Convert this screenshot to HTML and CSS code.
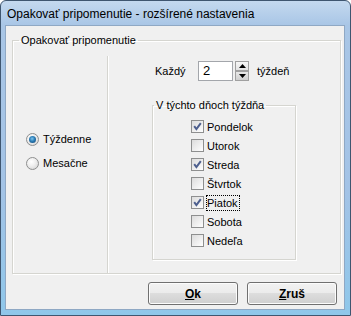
FILE: index.html
```html
<!DOCTYPE html>
<html>
  <head>
    <meta charset="UTF-8" />
    <link rel="stylesheet" href="styles.css">
  </head>
  <body>
    <div class="window">
      <div class="titlebar">Opakovať pripomenutie - rozšírené nastavenia</div>
      <div class="client">
        <fieldset class="group main-group">
          <legend>Opakovať pripomenutie</legend>
          <div class="cols">
            <div class="left-col">
              <div class="radio-row"><span class="radio checked"></span>Týždenne</div>
              <div class="radio-row"><span class="radio"></span>Mesačne</div>
            </div>
            <div class="right-col">
              <div class="every-row">
                <span class="every-label">Každý</span>
                <span class="num-field">2</span>
                <span class="spinner">
                  <span class="spin-btn"><svg width="7" height="4" viewBox="0 0 7 4"><path d="M0 4 L3.5 0 L7 4 Z" fill="#000"/></svg></span>
                  <span class="spin-btn down"><svg width="7" height="4" viewBox="0 0 7 4"><path d="M0 0 L3.5 4 L7 0 Z" fill="#000"/></svg></span>
                </span>
                <span class="unit">týždeň</span>
              </div>
              <fieldset class="group days-group">
                <legend>V týchto dňoch týždňa</legend>
                <div class="check-list">
                  <div class="check-row"><span class="checkbox checked"><svg width="11" height="11" viewBox="0 0 11 11"><path d="M2.2 5.2 L4.4 8 L8.8 2.2" fill="none" stroke="#4d5f8e" stroke-width="2"/></svg></span>Pondelok</div>
                  <div class="check-row"><span class="checkbox"></span>Utorok</div>
                  <div class="check-row"><span class="checkbox checked"><svg width="11" height="11" viewBox="0 0 11 11"><path d="M2.2 5.2 L4.4 8 L8.8 2.2" fill="none" stroke="#4d5f8e" stroke-width="2"/></svg></span>Streda</div>
                  <div class="check-row"><span class="checkbox"></span>Štvrtok</div>
                  <div class="check-row"><span class="checkbox checked"><svg width="11" height="11" viewBox="0 0 11 11"><path d="M2.2 5.2 L4.4 8 L8.8 2.2" fill="none" stroke="#4d5f8e" stroke-width="2"/></svg></span><span class="focused">Piatok</span></div>
                  <div class="check-row"><span class="checkbox"></span>Sobota</div>
                  <div class="check-row"><span class="checkbox"></span>Nedeľa</div>
                </div>
              </fieldset>
            </div>
          </div>
        </fieldset>
        <div class="buttons">
          <button class="btn"><u>O</u>k</button>
          <button class="btn"><u>Z</u>ruš</button>
        </div>
      </div>
    </div>
  </body>
</html>
```

FILE: styles.css
```css
body {
  margin: 0;
  font-family: "Liberation Sans", Arial, sans-serif;
  font-size: 11px;
  color: #000;
}

.window {
  width: 351px;
  height: 316px;
  box-sizing: border-box;
  border: 1px solid #3f5670;
  border-radius: 6px 6px 0 0;
  background: linear-gradient(to bottom, #c4d9ef 0, #a9c6e6 24px, #a3c3e6 60%, #8fc7ea 100%);
  display: flex;
  flex-direction: column;
}

.titlebar {
  height: 24px;
  line-height: 26px;
  padding-left: 6px;
  font-size: 12px;
  white-space: nowrap;
}

.client {
  width: 340px;
  height: 285px;
  box-sizing: border-box;
  margin-left: 4px;
  border: 1px solid #8fa8c4;
  background: #f0f0f0;
}

.group {
  margin: 0;
  padding: 0;
  border: 1px solid #d5d5d0;
  box-shadow: inset 1px 1px 0 #fff, 1px 1px 0 #fff;
  box-sizing: border-box;
  min-width: 0;
}
.group legend {
  padding: 0 2px;
  line-height: 14px;
}

.main-group {
  margin: 7px 0 0 6px;
  width: 329px;
  height: 241px;
}
.main-group > legend {
  margin-left: 6px;
}

.cols {
  display: flex;
  margin-top: 9px;
  height: 217px;
}

.left-col {
  width: 95px;
  box-sizing: border-box;
  border-right: 1px solid #d5d5d0;
  box-shadow: 1px 0 0 #fff;
  padding: 71px 0 0 13px;
}

.radio-row {
  display: flex;
  align-items: center;
  height: 24px;
}

.radio {
  width: 13px;
  height: 13px;
  box-sizing: border-box;
  border: 1px solid #8e8f8f;
  border-radius: 50%;
  background: radial-gradient(circle at 40% 35%, #ffffff 0, #f0f0f0 40%, #cfcfcf 100%);
  margin-right: 4px;
  display: flex;
  align-items: center;
  justify-content: center;
}
.radio.checked::after {
  content: "";
  width: 7px;
  height: 7px;
  border-radius: 50%;
  background: radial-gradient(circle at 45% 40%, #7fc5ef 0, #2a7cb5 45%, #0e3f6d 100%);
}

.right-col {
  flex: 1;
  padding-left: 44px;
}

.every-row {
  display: flex;
  align-items: center;
  height: 20px;
  margin-top: 5px;
}
.every-label {
  width: 43px;
  margin-left: 3px;
}
.num-field {
  width: 35px;
  height: 20px;
  box-sizing: border-box;
  border: 1px solid #a3a6ab;
  background: #fff;
  padding-left: 4px;
  font-size: 13px;
  line-height: 18px;
}
.spinner {
  display: flex;
  flex-direction: column;
  margin-left: 2px;
  width: 14px;
  height: 20px;
}
.spin-btn {
  height: 10px;
  box-sizing: border-box;
  border: 1px solid #a0a0a0;
  background: linear-gradient(to bottom, #f7f7f7, #e3e3e3);
  display: flex;
  align-items: center;
  justify-content: center;
}
.spin-btn.down {
  background: linear-gradient(to bottom, #e8e8e8, #cfcfcf);
}
.unit {
  margin-left: 8px;
}

.days-group {
  margin-top: 17px;
  width: 144px;
  height: 162px;
}
.days-group > legend {
  margin-left: 1px;
}

.check-list {
  padding: 5px 0 0 38px;
}
.check-row {
  display: flex;
  align-items: center;
  height: 19px;
}
.checkbox {
  width: 13px;
  height: 13px;
  box-sizing: border-box;
  border: 1px solid #8e8f8f;
  background: linear-gradient(135deg, #dcdcdc 0, #f4f4f4 70%, #ffffff 100%);
  margin-right: 3px;
  display: flex;
  align-items: center;
  justify-content: center;
}
.focused {
  outline: 1px dotted #000;
  outline-offset: 0;
  padding: 0 1px 0 0;
  line-height: 14px;
}

.buttons {
  display: flex;
  justify-content: flex-end;
  gap: 9px;
  margin: 8px 7px 0 0;
}
.btn {
  width: 90px;
  height: 23px;
  border: 1px solid #707070;
  border-radius: 3px;
  background: linear-gradient(to bottom, #f2f2f2 0, #ebebeb 50%, #dddddd 50%, #cfcfcf 100%);
  box-shadow: inset 0 0 0 1px #fcfcfc;
  font-family: inherit;
  font-size: 12px;
  font-weight: bold;
  color: #000;
  padding: 0;
}
```
